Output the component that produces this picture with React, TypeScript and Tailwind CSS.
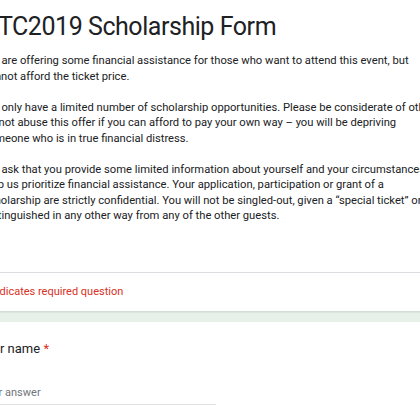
const description: string[][] = [
    [
        'We are offering some financial assistance for those who want to attend this event, but',
        'cannot afford the ticket price.',
    ],
    [
        'We only have a limited number of scholarship opportunities. Please be considerate of others and',
        'do not abuse this offer if you can afford to pay your own way \u2013 you will be depriving',
        'someone who is in true financial distress.',
    ],
    [
        'We ask that you provide some limited information about yourself and your circumstances to',
        'help us prioritize financial assistance. Your application, participation or grant of a',
        'scholarship are strictly confidential. You will not be singled-out, given a \u201cspecial ticket\u201d or',
        'distinguished in any other way from any of the other guests.',
    ],
];

export default function App() {
    return (
        <div className="h-[420px] w-[420px] overflow-hidden bg-[#e8f0ea] font-['Roboto',sans-serif]">
            <div className="-ml-[41px] flex w-[600px] flex-col gap-[11px]">
                <div className="bg-white px-[24px] pt-[7px] shadow-[0_1px_2px_rgba(0,0,0,0.12)]">
                    <h1 className="-ml-[7px] whitespace-nowrap text-[25px] leading-[40px] tracking-[-0.45px] text-[#202124]">
                        WTC2019 Scholarship Form
                    </h1>
                    <div className="mt-[6px] flex flex-col gap-[15.5px] text-[11.2px] leading-[15.5px] text-[#202124]">
                        {description.map((para, i) => (
                            <div key={i}>
                                {para.map((line) => (
                                    <p key={line} className="whitespace-nowrap">
                                        {line}
                                    </p>
                                ))}
                            </div>
                        ))}
                    </div>
                    <div className="mt-[48px] border-t border-[#dadce0] pb-[12px] pt-[11px]">
                        <p className="whitespace-nowrap text-[11px] leading-[15px] text-[#d93025]">
                            * Indicates required question
                        </p>
                    </div>
                </div>
                <div className="bg-white px-[24px] pt-[17px] pb-[24px]">
                    <p className="-ml-[5px] whitespace-nowrap text-[13px] leading-[20px] text-[#202124]">
                        Your name <span className="text-[#d93025]">*</span>
                    </p>
                    <div className="mt-[26px] w-[233px] border-b border-[#e0e0e0] pb-[3px]">
                        <p className="-ml-[3px] whitespace-nowrap text-[11px] leading-[16px] text-[#70757a]">
                            Your answer
                        </p>
                    </div>
                </div>
            </div>
        </div>
    );
}
